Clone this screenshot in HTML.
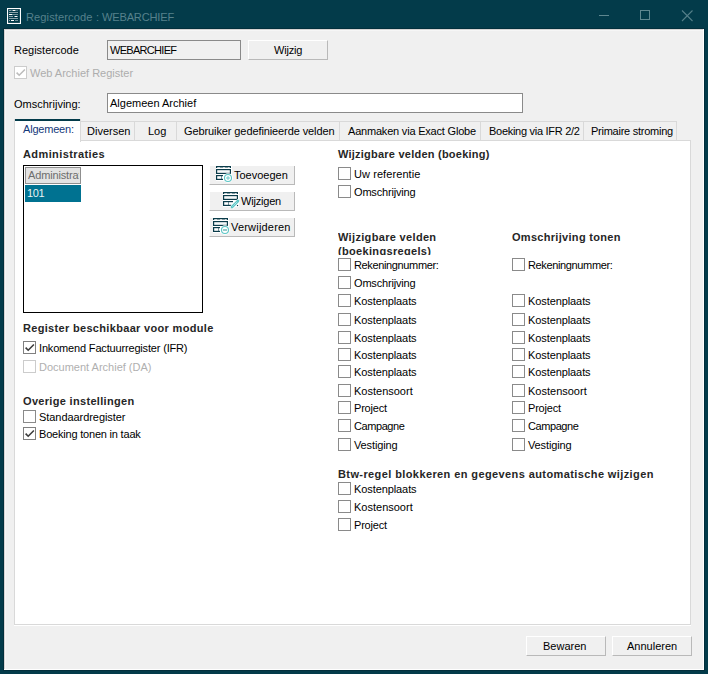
<!DOCTYPE html>
<html><head><meta charset="utf-8">
<style>
*{margin:0;padding:0;box-sizing:border-box}
html,body{width:708px;height:674px;overflow:hidden;background:#033b4a}
body{position:relative;font-family:"Liberation Sans",sans-serif;font-size:11px;color:#000}
.a{position:absolute}
.t{position:absolute;white-space:nowrap;line-height:13px;font-size:11px}
.b{font-weight:bold;letter-spacing:0.33px;color:#262626}
.edit{position:absolute;border:1px solid #8a8a8a;background:#fff}
.btn{position:absolute;background:#f0f0f0;border-top:1px solid #fff;border-left:1px solid #fff;border-right:1px solid #b9b9b9;border-bottom:1px solid #b9b9b9}
.cb{position:absolute;width:13px;height:13px;border:1px solid #8a8a8a;background:#fff}
.cb svg{position:absolute;left:-1px;top:-1px}
.tab{position:absolute;top:121px;height:19px;background:#f0f0f0;border:1px solid #d9d9d9;border-bottom:none}
.ibtn{position:absolute;left:209px;width:86px;border-left:1px solid #fff;height:19px;background:#f0f0f0;border-right:1px solid #b9b9b9;border-bottom:1px solid #b9b9b9}
</style></head><body>
<svg class="a" style="left:7px;top:8px" width="14" height="16" viewBox="0 0 14 16">
<rect x="0.5" y="0.5" width="13" height="15" fill="none" stroke="#fff" stroke-width="1.2"/>
<g stroke-width="1">
<line x1="2" y1="2.5" x2="4.5" y2="2.5" stroke="#8aa3aa"/><line x1="5.5" y1="2.5" x2="8.5" y2="2.5" stroke="#fff"/><line x1="9.5" y1="2.5" x2="10.5" y2="2.5" stroke="#8aa3aa"/>
<line x1="2" y1="4.5" x2="11" y2="4.5" stroke="#8aa3aa"/>
<line x1="2" y1="6.5" x2="5.5" y2="6.5" stroke="#fff"/><line x1="6" y1="6.5" x2="11" y2="6.5" stroke="#6f8f97"/>
<line x1="2" y1="8.5" x2="6" y2="8.5" stroke="#8aa3aa"/><line x1="7.5" y1="8.5" x2="10.5" y2="8.5" stroke="#fff"/>
<line x1="2" y1="10.5" x2="11" y2="10.5" stroke="#8aa3aa"/>
<line x1="2" y1="12.5" x2="3" y2="12.5" stroke="#8aa3aa"/><line x1="4" y1="12.5" x2="7" y2="12.5" stroke="#fff"/><line x1="8" y1="12.5" x2="11" y2="12.5" stroke="#6f8f97"/>
</g></svg>
<div class="t" style="left:26px;top:11px;letter-spacing:0.09px;color:#56818c;font-size:11.1px">Registercode</div>
<div class="t" style="left:96px;top:11px;color:#56818c;font-size:11.1px">:</div>
<div class="t" style="left:102px;top:11px;letter-spacing:-0.2px;color:#56818c;font-size:11.1px">WEBARCHIEF</div>
<svg class="a" style="left:590px;top:0" width="118" height="29">
<line x1="9" y1="15.5" x2="19" y2="15.5" stroke="#5e8790" stroke-width="1"/>
<rect x="50.5" y="10.5" width="9" height="9" fill="none" stroke="#5e8790" stroke-width="1"/>
<path d="M92 10.5 L102.5 21 M102.5 10.5 L92 21" stroke="#557f89" stroke-width="1.1"/>
</svg>
<div class="a" style="left:3px;top:28px;width:702px;height:643px;background:#022f3c"></div>
<div class="a" style="left:4px;top:29px;width:700px;height:641px;background:#fff"></div>
<div class="a" style="left:4px;top:29px;width:699px;height:640px;background:#d6d3d3"></div>
<div class="a" style="left:5px;top:30px;width:698px;height:639px;background:#f6f6f6"></div>
<div class="a" style="left:6px;top:31px;width:697px;height:638px;background:#f0f0f0"></div>
<div class="t" style="left:14px;top:44px">Registercode</div>
<div class="edit" style="left:107px;top:40px;width:134px;height:20px;background:#f0f0f0"></div>
<div class="t" style="left:110px;top:44px;letter-spacing:-0.7px">WEBARCHIEF</div>
<div class="btn" style="left:248px;top:40px;width:80px;height:20px"></div>
<div class="t" style="left:274px;top:44px;letter-spacing:-0.2px">Wijzig</div>
<div class="cb" style="left:14px;top:66px;border-color:#cccccc"><svg width="13" height="13"><path d="M2.6 6.6 L5.2 9.2 L10.9 3.5" fill="none" stroke="#bcbcbc" stroke-width="1.6"/></svg></div>
<div class="t" style="left:30px;top:67px;color:#adadad">Web Archief Register</div>
<div class="t" style="left:14px;top:98px">Omschrijving:</div>
<div class="edit" style="left:107px;top:93px;width:416px;height:20px"></div>
<div class="t" style="left:110px;top:97px">Algemeen Archief</div>
<div class="a" style="left:14px;top:140px;width:677px;height:485px;background:#fff;border:1px solid #d9d9d9"></div>
<div class="a" style="left:14px;top:625px;width:677px;height:1px;background:#fff"></div>
<div class="tab" style="left:80px;width:55px"></div>
<div class="t" style="left:87px;top:125px">Diversen</div>
<div class="tab" style="left:134px;width:43px"></div>
<div class="t" style="left:148px;top:125px">Log</div>
<div class="tab" style="left:176px;width:164px"></div>
<div class="t" style="left:184px;top:125px;letter-spacing:-0.1px">Gebruiker gedefinieerde velden</div>
<div class="tab" style="left:339px;width:142px"></div>
<div class="t" style="left:348px;top:125px;letter-spacing:-0.2px">Aanmaken via Exact Globe</div>
<div class="tab" style="left:480px;width:104px"></div>
<div class="t" style="left:489px;top:125px;letter-spacing:-0.28px">Boeking via IFR 2/2</div>
<div class="tab" style="left:583px;width:94px"></div>
<div class="t" style="left:591px;top:125px;letter-spacing:-0.25px">Primaire stroming</div>
<div class="a" style="left:14px;top:119px;width:67px;height:23px;background:#fff;border-left:1px solid #d9d9d9;border-right:1px solid #d9d9d9"></div>
<div class="a" style="left:15px;top:119px;width:65px;height:2px;background:#033b4a"></div>
<div class="t" style="left:23px;top:123px;letter-spacing:-0.2px;color:#14387a">Algemeen:</div>
<div class="t b" style="left:23px;top:148px;letter-spacing:0.4px">Administraties</div>
<div class="a" style="left:23px;top:165px;width:180px;height:148px;border:1px solid #000;background:#fff"></div>
<div class="a" style="left:25px;top:167px;width:56px;height:17px;border:1px solid #8f8f8f;background:#e3e3e3"></div>
<div class="t" style="left:28px;top:169px;color:#6d6d6d;width:51px;overflow:hidden;letter-spacing:-0.15px">Administratie</div>
<div class="a" style="left:25px;top:185px;width:56px;height:17px;background:#007291"></div>
<div class="t" style="left:27px;top:187px;letter-spacing:-0.4px;color:#e9f3f3">101</div>
<div class="ibtn" style="top:166px"></div>
<div class="ibtn" style="top:192px"></div>
<div class="ibtn" style="top:218px"></div>
<div class="t" style="left:234px;top:169px">Toevoegen</div>
<div class="t" style="left:241px;top:195px;letter-spacing:-0.2px">Wijzigen</div>
<div class="t" style="left:231px;top:221px;letter-spacing:0.2px">Verwijderen</div>
<svg class="a" style="left:216px;top:166px" width="17" height="17" viewBox="0 0 17 17"><rect x="0" y="0" width="16" height="15" fill="#fff"/><rect x="0" y="0" width="15" height="1.2" fill="#0b3c4a"/><rect x="0" y="1" width="1.2" height="1" fill="#0b3c4a"/><rect x="13.8" y="1" width="1.2" height="1" fill="#0b3c4a"/><rect x="4" y="1" width="3" height="0.9" fill="#0b3c4a" opacity="0.45"/><rect x="9" y="1" width="3" height="0.9" fill="#0b3c4a" opacity="0.45"/><rect x="0.6" y="3.6" width="13.8" height="3.8" fill="none" stroke="#0b3c4a" stroke-width="1.2"/><rect x="2" y="5.3" width="11" height="0.4" fill="#e6eced"/><rect x="0" y="9" width="1.2" height="5" fill="#0b3c4a"/><rect x="0" y="9" width="7" height="1.2" fill="#0b3c4a"/><rect x="0" y="12.8" width="7" height="1.2" fill="#0b3c4a"/><rect x="5" y="10" width="1" height="3" fill="#0b3c4a" opacity="0.55"/><circle cx="12" cy="12" r="4.8" fill="#fff"/><circle cx="12" cy="12" r="3.5" fill="none" stroke="#5cc6c6" stroke-width="1.1"/><path d="M12 10.2 V13.8 M10.2 12 H13.8" stroke="#88d4d4" stroke-width="1.5"/></svg>
<svg class="a" style="left:223px;top:192px" width="17" height="17" viewBox="0 0 17 17"><rect x="0" y="0" width="16" height="15" fill="#fff"/><rect x="0" y="0" width="15" height="1.2" fill="#0b3c4a"/><rect x="0" y="1" width="1.2" height="1" fill="#0b3c4a"/><rect x="13.8" y="1" width="1.2" height="1" fill="#0b3c4a"/><rect x="4" y="1" width="3" height="0.9" fill="#0b3c4a" opacity="0.45"/><rect x="9" y="1" width="3" height="0.9" fill="#0b3c4a" opacity="0.45"/><rect x="0.6" y="3.6" width="13.8" height="3.8" fill="none" stroke="#0b3c4a" stroke-width="1.2"/><rect x="2" y="5.3" width="11" height="0.4" fill="#e6eced"/><rect x="0" y="9" width="1.2" height="5" fill="#0b3c4a"/><rect x="0" y="9" width="10" height="1.2" fill="#0b3c4a"/><rect x="0" y="12.8" width="8.5" height="1.2" fill="#0b3c4a"/><rect x="13.9" y="12.9" width="1.2" height="1.2" fill="#0b3c4a"/><rect x="5" y="10" width="1" height="3" fill="#0b3c4a" opacity="0.55"/><path d="M8.3 15.9 L15.9 8.3" stroke="#fff" stroke-width="4"/><path d="M9 15 L15 9" stroke="#5cc6c6" stroke-width="2.6" stroke-linecap="round"/><path d="M9.6 14.4 L14.4 9.6" stroke="#e6f6f6" stroke-width="0.9" stroke-dasharray="1 0.8"/></svg>
<svg class="a" style="left:213px;top:218px" width="17" height="17" viewBox="0 0 17 17"><rect x="0" y="0" width="16" height="15" fill="#fff"/><rect x="0" y="0" width="15" height="1.2" fill="#0b3c4a"/><rect x="0" y="1" width="1.2" height="1" fill="#0b3c4a"/><rect x="13.8" y="1" width="1.2" height="1" fill="#0b3c4a"/><rect x="4" y="1" width="3" height="0.9" fill="#0b3c4a" opacity="0.45"/><rect x="9" y="1" width="3" height="0.9" fill="#0b3c4a" opacity="0.45"/><rect x="0.6" y="3.6" width="13.8" height="3.8" fill="none" stroke="#0b3c4a" stroke-width="1.2"/><rect x="2" y="5.3" width="11" height="0.4" fill="#e6eced"/><rect x="0" y="9" width="1.2" height="5" fill="#0b3c4a"/><rect x="0" y="9" width="7" height="1.2" fill="#0b3c4a"/><rect x="0" y="12.8" width="7" height="1.2" fill="#0b3c4a"/><rect x="5" y="10" width="1" height="3" fill="#0b3c4a" opacity="0.55"/><circle cx="12" cy="12" r="4.8" fill="#fff"/><circle cx="12" cy="12" r="3.5" fill="none" stroke="#5cc6c6" stroke-width="1.1"/><rect x="10" y="11.1" width="4" height="1.8" fill="#8cc4c4"/></svg>
<div class="t b" style="left:23px;top:322px;letter-spacing:0.32px">Register beschikbaar voor module</div>
<div class="cb" style="left:23px;top:341px;border-color:#808080"><svg width="13" height="13"><path d="M2.6 6.6 L5.2 9.2 L10.9 3.5" fill="none" stroke="#3c3c3c" stroke-width="1.6"/></svg></div>
<div class="t" style="left:39px;top:342px;letter-spacing:-0.17px">Inkomend Factuurregister (IFR)</div>
<div class="cb" style="left:23px;top:360px;border-color:#cccccc"></div>
<div class="t" style="left:39px;top:361px;color:#b0b0b0">Document Archief (DA)</div>
<div class="t b" style="left:23px;top:395px;letter-spacing:0.32px">Overige instellingen</div>
<div class="cb" style="left:23px;top:410px;border-color:#8a8a8a"></div>
<div class="t" style="left:39px;top:411px;letter-spacing:-0.06px">Standaardregister</div>
<div class="cb" style="left:23px;top:427px;border-color:#808080"><svg width="13" height="13"><path d="M2.6 6.6 L5.2 9.2 L10.9 3.5" fill="none" stroke="#3c3c3c" stroke-width="1.6"/></svg></div>
<div class="t" style="left:39px;top:428px;letter-spacing:-0.2px">Boeking tonen in taak</div>
<div class="t b" style="left:338px;top:148px;letter-spacing:0.23px">Wijzigbare velden (boeking)</div>
<div class="cb" style="left:338px;top:167px;border-color:#8a8a8a"></div>
<div class="t" style="left:354px;top:168px;letter-spacing:0.08px">Uw referentie</div>
<div class="cb" style="left:338px;top:185px;border-color:#8a8a8a"></div>
<div class="t" style="left:354px;top:186px;letter-spacing:-0.179px">Omschrijving</div>
<div class="a b" style="left:338px;top:230px;width:150px;height:25px;overflow:hidden;line-height:14px;font-size:11px">Wijzigbare velden<br>(boekingsregels)</div>
<div class="t b" style="left:512px;top:231px;letter-spacing:0.3px">Omschrijving tonen</div>
<div class="cb" style="left:338px;top:258px;border-color:#8a8a8a"></div>
<div class="t" style="left:354px;top:259px;letter-spacing:-0.359px">Rekeningnummer:</div>
<div class="cb" style="left:512px;top:258px;border-color:#8a8a8a"></div>
<div class="t" style="left:528px;top:259px;letter-spacing:-0.359px">Rekeningnummer:</div>
<div class="cb" style="left:338px;top:276px;border-color:#8a8a8a"></div>
<div class="t" style="left:354px;top:277px;letter-spacing:-0.179px">Omschrijving</div>
<div class="cb" style="left:338px;top:294px;border-color:#8a8a8a"></div>
<div class="t" style="left:354px;top:295px;letter-spacing:-0.089px">Kostenplaats</div>
<div class="cb" style="left:512px;top:294px;border-color:#8a8a8a"></div>
<div class="t" style="left:528px;top:295px;letter-spacing:-0.089px">Kostenplaats</div>
<div class="cb" style="left:338px;top:313px;border-color:#8a8a8a"></div>
<div class="t" style="left:354px;top:314px;letter-spacing:-0.089px">Kostenplaats</div>
<div class="cb" style="left:512px;top:313px;border-color:#8a8a8a"></div>
<div class="t" style="left:528px;top:314px;letter-spacing:-0.089px">Kostenplaats</div>
<div class="cb" style="left:338px;top:331px;border-color:#8a8a8a"></div>
<div class="t" style="left:354px;top:332px;letter-spacing:-0.089px">Kostenplaats</div>
<div class="cb" style="left:512px;top:331px;border-color:#8a8a8a"></div>
<div class="t" style="left:528px;top:332px;letter-spacing:-0.089px">Kostenplaats</div>
<div class="cb" style="left:338px;top:348px;border-color:#8a8a8a"></div>
<div class="t" style="left:354px;top:349px;letter-spacing:-0.089px">Kostenplaats</div>
<div class="cb" style="left:512px;top:348px;border-color:#8a8a8a"></div>
<div class="t" style="left:528px;top:349px;letter-spacing:-0.089px">Kostenplaats</div>
<div class="cb" style="left:338px;top:365px;border-color:#8a8a8a"></div>
<div class="t" style="left:354px;top:366px;letter-spacing:-0.089px">Kostenplaats</div>
<div class="cb" style="left:512px;top:365px;border-color:#8a8a8a"></div>
<div class="t" style="left:528px;top:366px;letter-spacing:-0.089px">Kostenplaats</div>
<div class="cb" style="left:338px;top:384px;border-color:#8a8a8a"></div>
<div class="t" style="left:354px;top:385px">Kostensoort</div>
<div class="cb" style="left:512px;top:384px;border-color:#8a8a8a"></div>
<div class="t" style="left:528px;top:385px">Kostensoort</div>
<div class="cb" style="left:338px;top:401px;border-color:#8a8a8a"></div>
<div class="t" style="left:354px;top:402px;letter-spacing:-0.2px">Project</div>
<div class="cb" style="left:512px;top:401px;border-color:#8a8a8a"></div>
<div class="t" style="left:528px;top:402px;letter-spacing:-0.2px">Project</div>
<div class="cb" style="left:338px;top:419px;border-color:#8a8a8a"></div>
<div class="t" style="left:354px;top:420px;letter-spacing:-0.427px">Campagne</div>
<div class="cb" style="left:512px;top:419px;border-color:#8a8a8a"></div>
<div class="t" style="left:528px;top:420px;letter-spacing:-0.427px">Campagne</div>
<div class="cb" style="left:338px;top:438px;border-color:#8a8a8a"></div>
<div class="t" style="left:354px;top:439px;letter-spacing:-0.125px">Vestiging</div>
<div class="cb" style="left:512px;top:438px;border-color:#8a8a8a"></div>
<div class="t" style="left:528px;top:439px;letter-spacing:-0.125px">Vestiging</div>
<div class="t b" style="left:338px;top:468px;letter-spacing:0.4px">Btw-regel blokkeren en gegevens automatische wijzigen</div>
<div class="cb" style="left:338px;top:482px;border-color:#8a8a8a"></div>
<div class="t" style="left:354px;top:483px;letter-spacing:-0.089px">Kostenplaats</div>
<div class="cb" style="left:338px;top:500px;border-color:#8a8a8a"></div>
<div class="t" style="left:354px;top:501px">Kostensoort</div>
<div class="cb" style="left:338px;top:518px;border-color:#8a8a8a"></div>
<div class="t" style="left:354px;top:519px;letter-spacing:-0.2px">Project</div>
<div class="btn" style="left:526px;top:636px;width:80px;height:20px"></div>
<div class="t" style="left:543px;top:640px">Bewaren</div>
<div class="btn" style="left:612px;top:636px;width:80px;height:20px"></div>
<div class="t" style="left:627px;top:640px">Annuleren</div>
</body></html>
